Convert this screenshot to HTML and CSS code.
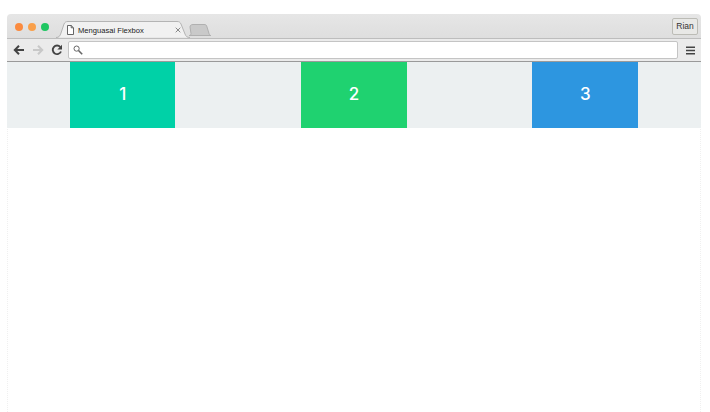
FILE: index.html
```html
<!DOCTYPE html>
<html lang="id">
<head>
<meta charset="utf-8">
<title>Menguasai Flexbox</title>
<link rel="stylesheet" href="styles.css">
</head>
<body>
<div class="window">
  <div class="tabstrip">
    <div class="lights">
      <span class="light red"></span>
      <span class="light orange"></span>
      <span class="light green"></span>
    </div>
    <div class="tab">
      <svg class="tab-shape" width="134" height="17" viewBox="0 0 134 17"><path d="M0 16.500C3 16.500 4 15 5 12L8 3C9 1 10 .5 12 .5H121C123 .5 124 1 125 3L129 13C130 15.500 131 16.500 134 16.500" fill="#f1f1f1" stroke="#b4b4b4"/></svg>
      <svg class="page-icon" width="7" height="10" viewBox="0 0 7 10"><path d="M.5.5H4.200L6.500 2.800V9.500H.5Z M4.200 .5V2.800H6.500" fill="#fff" stroke="#555" stroke-width=".9"/></svg>
      <span class="tab-title">Menguasai Flexbox</span>
      <svg class="tab-close" width="6" height="6" viewBox="0 0 6 6"><path d="M.7.7L5.300 5.300M5.300.7L.7 5.300" stroke="#888" stroke-width="1"/></svg>
    </div>
    <svg class="new-tab" width="23" height="12" viewBox="0 0 23 12"><path d="M1 11.500C2 11.500 3 11 3 9.500L2 3C2 1.500 3 .5 5 .5H16C18 .5 18.500 1 19 3L21 9.500C21.500 11 22 11.500 23 11.500Z" fill="#c9c9c9" stroke="#b0b0b0"/></svg>
    <div class="profile">Rian</div>
  </div>
  <div class="toolbar">
    <svg class="nav-icon" width="12" height="12" viewBox="0 0 12 12"><path d="M11 6H2.500M6 1.800L1.800 6L6 10.200" fill="none" stroke="#444" stroke-width="2"/></svg>
    <svg class="nav-icon" width="12" height="12" viewBox="0 0 12 12"><path d="M1 6H9.500M6 1.800L10.200 6L6 10.200" fill="none" stroke="#c8c8c8" stroke-width="2"/></svg>
    <svg class="nav-icon" width="12" height="12" viewBox="0 0 12 12"><path d="M10 7.500A4.300 4.300 0 1 1 9.300 3" fill="none" stroke="#444" stroke-width="1.900"/><path d="M11 .8V5.500H6.300Z" fill="#444"/></svg>
    <div class="omnibox">
      <svg width="10" height="10" viewBox="0 0 10 10"><circle cx="3.600" cy="3.600" r="2.600" fill="none" stroke="#666" stroke-width="1"/><path d="M5.500 5.500L9.200 9.200" stroke="#666" stroke-width="1.600"/></svg>
    </div>
    <svg class="menu-icon" width="9" height="9" viewBox="0 0 9 9"><path d="M0 1.200H9M0 4.500H9M0 7.800H9" stroke="#444" stroke-width="1.600"/></svg>
  </div>
  <main class="page">
    <section class="flex-row">
      <div class="item teal">1</div>
      <div class="item emerald">2</div>
      <div class="item blue">3</div>
    </section>
  </main>
</div>
</body>
</html>
```
FILE: styles.css
```css
* {
  box-sizing: border-box;
}

html,
body {
  height: 100%;
  margin: 0;
}

body {
  background: #fff;
  padding: 14px 9px 0 7px;
  font-family: "Liberation Sans", Arial, sans-serif;
  overflow: hidden;
}

.window {
  height: 100%;
  display: flex;
  flex-direction: column;
}

.tabstrip {
  height: 24px;
  flex: none;
  display: flex;
  align-items: flex-end;
  padding-left: 8px;
  background: linear-gradient(#e6e6e6, #dedede);
  border-radius: 4px 4px 0 0;
}

.lights {
  display: flex;
  gap: 5px;
  align-self: flex-start;
  margin-top: 9px;
  margin-right: 7px;
}

.light {
  width: 8px;
  height: 8px;
  border-radius: 50%;
}

.red { background: #fb8b3f; }
.orange { background: #f9a04b; }
.green { background: #1fc662; }

.tab {
  position: relative;
  width: 134px;
  height: 17px;
  display: flex;
  align-items: center;
  padding: 1px 9px 0 11px;
  flex: none;
}

.tab-shape {
  position: absolute;
  left: 0;
  top: 0;
}

.page-icon,
.tab-title,
.tab-close {
  position: relative;
}

.tab-title {
  margin-left: 4px;
  font-size: 7.600px;
  color: #222;
  flex: 1;
  white-space: nowrap;
}

.new-tab {
  flex: none;
  margin: 0 0 2px -2px;
}

.profile {
  margin-left: auto;
  margin-right: 3px;
  align-self: flex-start;
  margin-top: 4px;
  width: 26px;
  height: 17px;
  border: 1px solid #bcbcb6;
  border-radius: 2px;
  background: #e8e8e6;
  font-size: 8.500px;
  line-height: 15px;
  text-align: center;
  color: #333;
}

.toolbar {
  height: 24px;
  flex: none;
  display: flex;
  align-items: center;
  gap: 7px;
  padding: 0 6px;
  background: #ebebeb;
  border-top: 1px solid #bdbdbd;
  border-bottom: 1px solid #9a9a9a;
}

.omnibox {
  flex: 1;
  height: 18px;
  margin-left: -2px;
  margin-right: 1px;
  display: flex;
  align-items: center;
  padding-left: 4px;
  background: #fff;
  border: 1px solid #c4c4c4;
  border-radius: 2px;
}

.menu-icon {
  flex: none;
}

.page {
  flex: 1;
  background: #fff;
  border-left: 1px dotted #f0f0f0;
  border-right: 1px dotted #f0f0f0;
}

.flex-row {
  height: 66px;
  display: flex;
  justify-content: space-around;
  background: #ecf0f1;
  margin: 0 -1px;
}

.item {
  width: 105.660px;
  display: flex;
  align-items: center;
  justify-content: center;
  padding-bottom: 2px;
  color: #fff;
  font-family: Inter, sans-serif;
  font-size: 17px;
  font-weight: 500;
}

.teal { background: #00d1a7; }
.emerald { background: #1fd270; }
.blue { background: #2d96e0; }
```
